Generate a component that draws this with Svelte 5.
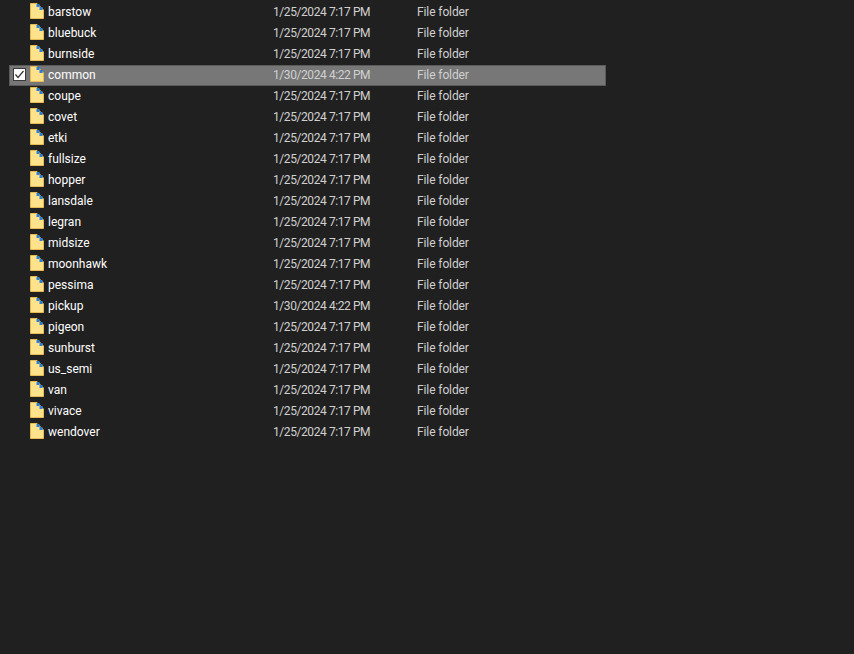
<script>
  const rows = [
    ['barstow','1/25/2024 7:17 PM'],['bluebuck','1/25/2024 7:17 PM'],['burnside','1/25/2024 7:17 PM'],
    ['common','1/30/2024 4:22 PM'],['coupe','1/25/2024 7:17 PM'],['covet','1/25/2024 7:17 PM'],
    ['etki','1/25/2024 7:17 PM'],['fullsize','1/25/2024 7:17 PM'],['hopper','1/25/2024 7:17 PM'],
    ['lansdale','1/25/2024 7:17 PM'],['legran','1/25/2024 7:17 PM'],['midsize','1/25/2024 7:17 PM'],
    ['moonhawk','1/25/2024 7:17 PM'],['pessima','1/25/2024 7:17 PM'],['pickup','1/30/2024 4:22 PM'],
    ['pigeon','1/25/2024 7:17 PM'],['sunburst','1/25/2024 7:17 PM'],['us_semi','1/25/2024 7:17 PM'],
    ['van','1/25/2024 7:17 PM'],['vivace','1/25/2024 7:17 PM'],['wendover','1/25/2024 7:17 PM']
  ];
</script>

<div class="list">
  {#each rows as [name, date]}
    <div class="row" class:selected={name === 'common'}>
      <span class="check">
        {#if name === 'common'}
          <svg width="13" height="13" viewBox="0 0 13 13"><rect x="0.5" y="0.5" width="12" height="12" fill="#fff" stroke="#3a3a3a"/><path d="M2.5 6.5 L5 9.5 L10.5 3" fill="none" stroke="#333" stroke-width="1.2"/></svg>
        {/if}
      </span>
      <svg class="folder" width="14" height="16" viewBox="0 0 14 16">
        <path d="M0.5 0.5H7L13.5 7V15.5H0.5Z" fill="#ffe38c" stroke="#e8bb52"/>
        <path d="M6.5 1H9.5V4H12.5V7H9.5V4H6.5Z" fill="#2a7fd4"/>
      </svg>
      <span class="name">{name}</span>
      <span class="date">{date}</span>
      <span class="type">File folder</span>
    </div>
  {/each}
</div>

<style>
  :global(body) { margin: 0; background: #202020; }
  .list {
    height: 654px;
    box-sizing: border-box;
    padding: 2px 0 0 9px;
    background: #202020;
    font-family: "Roboto", "Noto Sans", sans-serif;
    font-size: 12px;
    color: #fff;
    overflow: hidden;
  }
  .row {
    width: 597px;
    height: 21px;
    box-sizing: border-box;
    display: flex;
    align-items: center;
    border: 1px solid transparent;
  }
  .row.selected { background: #777; border-color: #5a5a5a; }
  .check { width: 13px; height: 13px; margin: 0 0 2px 3px; display: flex; }
  .folder { margin: 0 0 3px 4px; flex: none; }
  .name { margin-left: 4px; width: 225px; flex: none; padding-bottom: 2px; }
  .date { width: 144px; flex: none; color: #d0d0d0; padding-bottom: 2px; letter-spacing: -0.42px; }
  .type { color: #d0d0d0; padding-bottom: 2px; letter-spacing: -0.1px; }
</style>
